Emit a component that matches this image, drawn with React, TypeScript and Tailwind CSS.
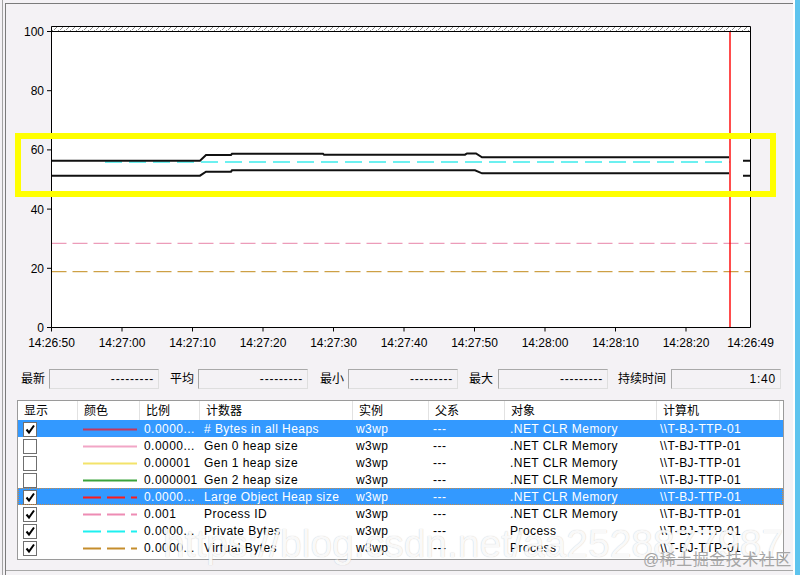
import React from "react";

type Row = {
  show: boolean;
  color: string;
  dashed: boolean;
  scale: string;
  counter: string;
  instance: string;
  parent: string;
  object: string;
  computer: string;
  selected?: boolean;
  focused?: boolean;
};

const rows: Row[] = [
  { show: true, color: "#c4375e", dashed: false, scale: "0.0000...", counter: "# Bytes in all Heaps", instance: "w3wp", parent: "---", object: ".NET CLR Memory", computer: "\\\\T-BJ-TTP-01", selected: true },
  { show: false, color: "#f2a6c6", dashed: false, scale: "0.0000...", counter: "Gen 0 heap size", instance: "w3wp", parent: "---", object: ".NET CLR Memory", computer: "\\\\T-BJ-TTP-01" },
  { show: false, color: "#f3e36a", dashed: false, scale: "0.00001", counter: "Gen 1 heap size", instance: "w3wp", parent: "---", object: ".NET CLR Memory", computer: "\\\\T-BJ-TTP-01" },
  { show: false, color: "#3aa33a", dashed: false, scale: "0.000001", counter: "Gen 2 heap size", instance: "w3wp", parent: "---", object: ".NET CLR Memory", computer: "\\\\T-BJ-TTP-01" },
  { show: true, color: "#ff1a1a", dashed: true, scale: "0.0000...", counter: "Large Object Heap size", instance: "w3wp", parent: "---", object: ".NET CLR Memory", computer: "\\\\T-BJ-TTP-01", selected: true, focused: true },
  { show: true, color: "#ee8cb4", dashed: true, scale: "0.001", counter: "Process ID", instance: "w3wp", parent: "---", object: ".NET CLR Memory", computer: "\\\\T-BJ-TTP-01" },
  { show: true, color: "#1ef0f0", dashed: true, scale: "0.0000...", counter: "Private Bytes", instance: "w3wp", parent: "---", object: "Process", computer: "\\\\T-BJ-TTP-01" },
  { show: true, color: "#c58d2c", dashed: true, scale: "0.0000...", counter: "Virtual Bytes", instance: "w3wp", parent: "---", object: "Process", computer: "\\\\T-BJ-TTP-01" },
];

const headers = ["显示", "颜色", "比例", "计数器", "实例", "父系", "对象", "计算机"];

const yTicks = [
  { v: "100", y: 31.5 },
  { v: "80", y: 90.7 },
  { v: "60", y: 149.9 },
  { v: "40", y: 209.1 },
  { v: "20", y: 268.3 },
  { v: "0", y: 327.5 },
];

const xLabels = [
  "14:26:50",
  "14:27:00",
  "14:27:10",
  "14:27:20",
  "14:27:30",
  "14:27:40",
  "14:27:50",
  "14:28:00",
  "14:28:10",
  "14:28:20",
];

function Chart() {
  return (
    <svg width={787} height={365} viewBox="6 4 787 365" className="block" fontFamily="Liberation Sans, sans-serif" fontSize={12}>
      <defs>
        <pattern id="hatch" width="6" height="5" patternUnits="userSpaceOnUse">
          <line x1="0" y1="5" x2="5" y2="0" stroke="#8c8c8c" strokeWidth="1" />
        </pattern>
      </defs>
      <rect x={51.5} y={26.5} width={699} height={301} fill="#ffffff" />
      <rect x={51.5} y={26.5} width={699} height={5} fill="url(#hatch)" />

      {/* reference dashed lines */}
      <path d="M51.5 243.3 H750.5" stroke="#e884a8" strokeWidth={1} strokeDasharray="15 6" fill="none" />
      <path d="M51.5 271.7 H750.5" stroke="#c28a1a" strokeWidth={1} strokeDasharray="15 6" fill="none" />

      {/* cyan private bytes */}
      <path d="M105 162 H730" stroke="#6cf0f0" strokeWidth={2} strokeDasharray="17 7" fill="none" />

      {/* black heap lines */}
      <path
        d="M51.5 160.7 H200 L206 155 H231 L232 153.8 H323 L324 154.7 H465 L467 153.4 H476 L482 157.3 H729"
        stroke="#111"
        strokeWidth={2}
        fill="none"
      />
      <path d="M51.5 175.7 H200 L206 171.7 H231 L232 170.3 H475 L482 173.3 H729" stroke="#111" strokeWidth={2} fill="none" />
      <path d="M743 160.7 H750.5 M743 175.7 H750.5" stroke="#111" strokeWidth={2} fill="none" />

      {/* current time marker */}
      <line x1={730} y1={32} x2={730} y2={327} stroke="#ff0000" strokeWidth={1.4} />

      {/* frame */}
      <path d="M51.5 26.5 H750.5 V327.5 M51.5 26.5 V327.5 H750.5 M51.5 31.5 H750.5" stroke="#000" strokeWidth={1} fill="none" />

      {yTicks.map((t) => (
        <g key={t.v}>
          <path d={`M47 ${t.y} H51.5`} stroke="#000" strokeWidth={1} />
          <text x={44} y={t.y + 4.5} textAnchor="end" fill="#000">
            {t.v}
          </text>
        </g>
      ))}

      {xLabels.map((l, i) => {
        const x = 51.5 + i * 70.5;
        return (
          <g key={l}>
            <path d={`M${x} 327.5 V331.5`} stroke="#000" strokeWidth={1} />
            <text x={x} y={347} textAnchor="middle" fill="#000">
              {l}
            </text>
          </g>
        );
      })}
      <text x={750.5} y={347} textAnchor="middle" fill="#000">
        14:26:49
      </text>

      {/* highlight annotation */}
      <rect x={18} y={136} width={755} height={58} stroke="#ffff00" strokeWidth={6} fill="none" />
    </svg>
  );
}

function StatBox({ value, className }: { value: string; className?: string }) {
  return (
    <div
      className={`flex h-[20px] w-[110px] items-center justify-end border border-[#a9a9a9] border-b-[#dedede] border-r-[#dedede] pr-[4px] tracking-[0.8px] ${className ?? ""}`}
    >
      {value}
    </div>
  );
}

function Check({ on }: { on: boolean }) {
  return (
    <div className="h-[15px] w-[14px] border border-[#6f6f6f] bg-white">
      {on && (
        <svg width={12} height={13} viewBox="0 0 12 13" className="block">
          <polyline points="2.5,6.5 5,9.5 10,2.5" stroke="#000" strokeWidth={2} fill="none" />
        </svg>
      )}
    </div>
  );
}

const cols = "grid grid-cols-[60px_62px_60px_153px_76px_76px_152px_123px]";

export default function App() {
  return (
    <div className="relative flex h-[575px] w-[800px] overflow-hidden bg-[#f4f2f5] font-['Liberation_Sans','Noto_Sans_CJK_SC',sans-serif] text-[12px] text-black">
      <div className="w-[2px]" />
      <div className="w-px bg-[#a3a3a3]" />
      <div className="w-[2px]" />
      <div className="mt-[3px] flex w-[788px] flex-col border-l border-t border-[#7b7b7b]">
        <Chart />

        <div className="flex h-[20px] items-center">
          <span className="ml-[15px]">最新</span>
          <StatBox className="ml-[4px]" value="---------" />
          <span className="ml-[11px]">平均</span>
          <StatBox className="ml-[4px]" value="---------" />
          <span className="ml-[12px]">最小</span>
          <StatBox className="ml-[4px]" value="---------" />
          <span className="ml-[11px]">最大</span>
          <StatBox className="ml-[5px]" value="---------" />
          <span className="ml-[10px]">持续时间</span>
          <StatBox className="ml-[5px]" value="1:40" />
        </div>

        <div className="ml-[11px] mt-[11px] h-[160px] w-[767px] border border-[#9a9a9a] bg-white">
          <div className={`${cols} h-[19px]`}>
            {headers.map((h) => (
              <div key={h} className="flex items-center border-r border-[#e2e2e2] pl-[6px]">
                {h}
              </div>
            ))}
          </div>
          {rows.map((r) => (
            <div
              key={r.counter}
              className={`${cols} h-[17px] items-center tracking-[0.45px] ${r.selected ? "bg-[#3399ff] text-white" : ""} ${
                r.focused ? "outline-1 -outline-offset-1 outline-dotted outline-[#c98a45]" : ""
              }`}
            >
              <div className="pl-[5px]">
                <Check on={r.show} />
              </div>
              <div className="pl-[5px]">
                <svg width={54} height={3} className="block">
                  <line x1={0} y1={1.5} x2={54} y2={1.5} stroke={r.color} strokeWidth={2} strokeDasharray={r.dashed ? "18 6" : undefined} />
                </svg>
              </div>
              <div className="pl-[4px] whitespace-nowrap">{r.scale}</div>
              <div className="pl-[4px] whitespace-nowrap">{r.counter}</div>
              <div className="pl-[3px]">{r.instance}</div>
              <div className="pl-[4px]">{r.parent}</div>
              <div className="pl-[5px] whitespace-nowrap">{r.object}</div>
              <div className="pl-[3px] whitespace-nowrap">{r.computer}</div>
            </div>
          ))}
        </div>

        <div className="mt-[10px] h-px bg-[#a8a8a8]" />
      </div>
      <div className="w-[2px] bg-white" />
      <div className="w-[5px] bg-[#5ec4ee]" />

      <div className="absolute left-[163px] top-[524px] whitespace-nowrap text-[39px] leading-none text-white/90 [text-shadow:0_0_1px_rgba(0,0,0,0.25)]">
        https://blog.csdn.net/aa2528877987
      </div>
      <div className="absolute left-[643px] top-[552px] whitespace-nowrap text-[16px] leading-none tracking-[0.5px] text-[#a6a6a6]">
        @稀土掘金技术社区
      </div>
    </div>
  );
}
